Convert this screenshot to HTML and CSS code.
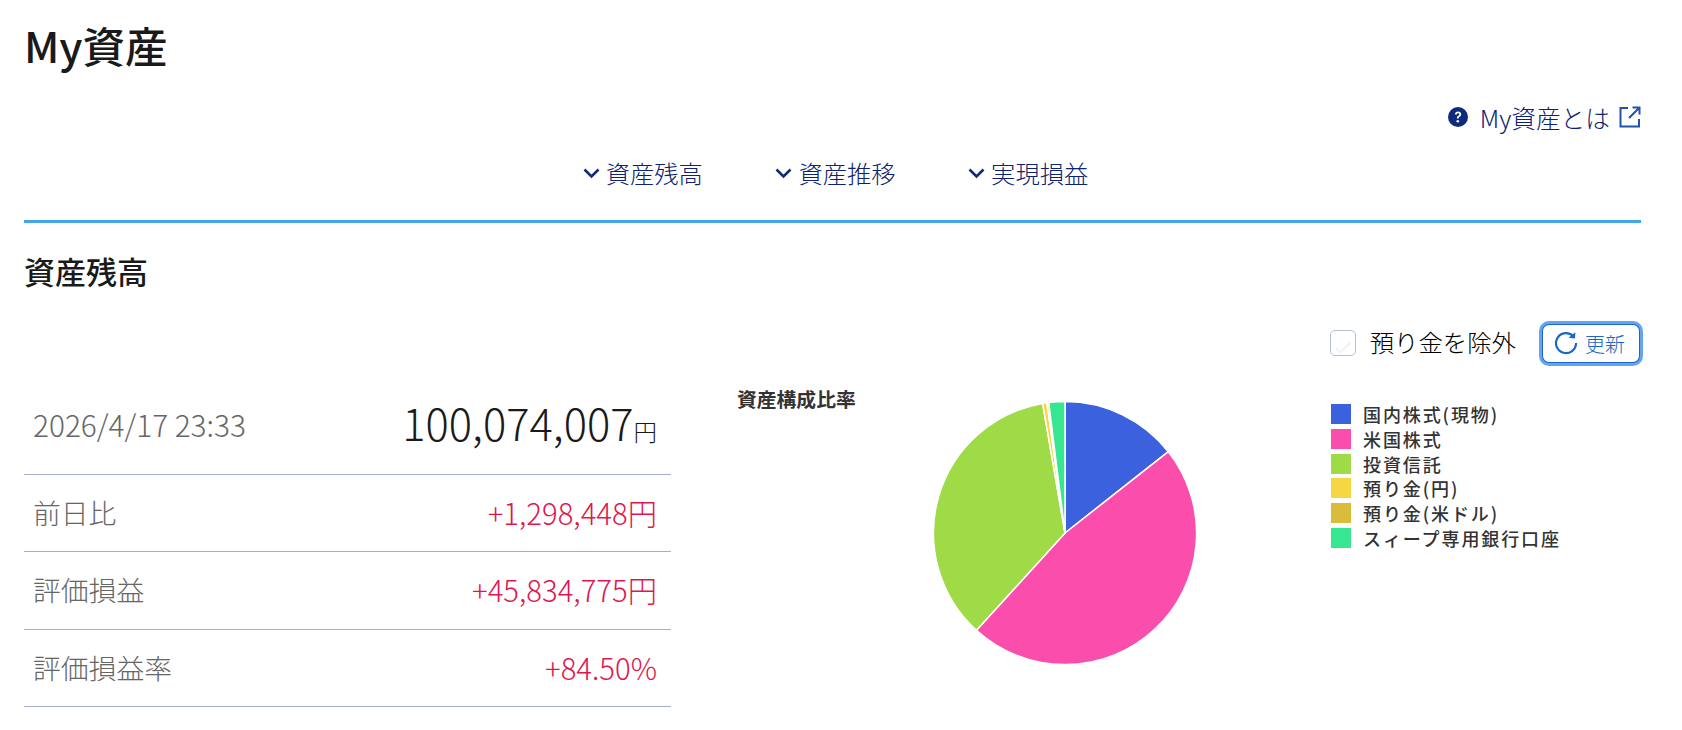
FILE: index.html
```html
<!DOCTYPE html>
<html lang="ja">
<head>
  <meta charset="UTF-8">
  <meta name="viewport" content="width=device-width, initial-scale=1.0">
  <title>My資産</title>
  <link rel="stylesheet" href="styles.css">
</head>
<body>
  <h1 class="page-title">My資産</h1>
  <div class="help-row">
    <a class="help-link" href="#">
      <svg class="help-icon" viewBox="0 0 20 20" width="20" height="20"><circle cx="10" cy="10" r="10" fill="#0f2a7d"/><path d="M6.9 7.6c.1-1.9 1.4-3 3.2-3 1.800 0 3.100 1.100 3.100 2.700 0 1.200-.6 1.900-1.500 2.500-.8.5-1 .8-1 1.600H8.900c-.1-1.300.3-2 1.300-2.600.8-.5 1.100-.9 1.100-1.400 0-.7-.5-1.100-1.200-1.100-.8 0-1.300.5-1.300 1.300z" fill="#fff"/><circle cx="9.800" cy="14.300" r="1.300" fill="#fff"/></svg>
      <span>My資産とは</span>
      <svg class="ext-icon" viewBox="0 0 22 22" width="22" height="22" fill="none" stroke="#1f55a8" stroke-width="2"><path d="M9 2H1.500v18.500h18.500V13"/><path d="M10 12L20.500 1.500M13.500 1.500h7v7"/></svg>
    </a>
  </div>
  <nav class="tabs">
    <a class="tab" href="#"><svg class="chevron" viewBox="0 0 17 11" width="17" height="11"><path d="M1.500 1.500L8.500 8.500l7-7" fill="none" stroke="#0f2a7d" stroke-width="2.600"/></svg>資産残高</a>
    <a class="tab" href="#"><svg class="chevron" viewBox="0 0 17 11" width="17" height="11"><path d="M1.500 1.500L8.500 8.500l7-7" fill="none" stroke="#0f2a7d" stroke-width="2.600"/></svg>資産推移</a>
    <a class="tab" href="#"><svg class="chevron" viewBox="0 0 17 11" width="17" height="11"><path d="M1.500 1.500L8.500 8.500l7-7" fill="none" stroke="#0f2a7d" stroke-width="2.600"/></svg>実現損益</a>
  </nav>
  <h2 class="section-title">資産残高</h2>
  <div class="toolbar">
    <label class="check-label">
      <span class="checkbox"><svg viewBox="0 0 26 26" width="24" height="24"><path d="M5 14l5 5 11-11" fill="none" stroke="#eaf5fd" stroke-width="2.500"/></svg></span>
      預り金を除外
    </label>
    <button class="refresh-btn">
      <svg viewBox="0 0 24 24" width="24" height="24" fill="none" stroke="#1a66c9" stroke-width="2.200"><path d="M19.500 5.500A10 10 0 1 0 22 12"/><path d="M14.500 6.800L21 7.500l.4-6.300z" fill="#1a66c9" stroke="none"/></svg>
      更新
    </button>
  </div>
  <div class="balance">
    <table class="summary">
      <tr class="total-row">
        <th class="date">2026/4/17 23:33</th>
        <td class="total">100,074,007<span class="yen">円</span></td>
      </tr>
      <tr>
        <th>前日比</th>
        <td class="plus">+1,298,448円</td>
      </tr>
      <tr>
        <th>評価損益</th>
        <td class="plus">+45,834,775円</td>
      </tr>
      <tr>
        <th>評価損益率</th>
        <td class="plus">+84.50%</td>
      </tr>
    </table>
    <div class="chart">
      <div class="chart-title">資産構成比率</div>
      <svg class="pie" viewBox="-131.500 -131.500 263 263" width="264" height="264">
        <g stroke="#fff" stroke-width="1.500" stroke-linejoin="round">
          <path d="M0 0V-131A131 131 0 0 1 102.950 -81z" fill="#3b61df"/>
          <path d="M0 0L102.950 -81A131 131 0 0 1 -88.200 96.900z" fill="#fb4dac"/>
          <path d="M0 0L-88.200 96.900A131 131 0 0 1 -22.300 -129.100z" fill="#9fda47"/>
          <path d="M0 0L-22.300 -129.100A131 131 0 0 1 -18 -129.800z" fill="#f6d743"/>
          <path d="M0 0L-18 -129.800A131 131 0 0 1 -16.200 -130z" fill="#d9bd3a"/>
          <path d="M0 0L-16.200 -130A131 131 0 0 1 0 -131z" fill="#36e691"/>
        </g>
      </svg>
      <ul class="legend">
        <li><i class="swatch c1"></i>国内株式(現物)</li>
        <li><i class="swatch c2"></i>米国株式</li>
        <li><i class="swatch c3"></i>投資信託</li>
        <li><i class="swatch c4"></i>預り金(円)</li>
        <li><i class="swatch c5"></i>預り金(米ドル)</li>
        <li><i class="swatch c6"></i>スィープ専用銀行口座</li>
      </ul>
    </div>
  </div>
</body>
</html>
```

FILE: styles.css
```css
body {
  margin: 0;
  padding: 0 41px 0 24px;
  height: 730px;
  box-sizing: border-box;
  overflow: hidden;
  background-color: #fff;
  color: #1a1a1a;
  font-family: "Noto Sans CJK JP", "Noto Sans", sans-serif;
}
a {
  text-decoration: none;
  color: #0b2172;
}
.page-title {
  margin: 0;
  padding-top: 14px;
  height: 66px;
  line-height: 62px;
  font-size: 42.600px;
  font-weight: 500;
}
.help-row {
  display: flex;
  justify-content: flex-end;
  height: 40px;
  padding-top: 19px;
  padding-bottom: 1px;
}
.help-link {
  display: flex;
  align-items: center;
  height: 36px;
  font-size: 24.700px;
  font-weight: 300;
}
.help-icon {
  margin-right: 12px;
}
.ext-icon {
  margin-left: 9px;
}
.tabs {
  display: flex;
  justify-content: center;
  gap: 72.500px;
  height: 66px;
  padding-top: 14px;
  padding-left: 6px;
  border-bottom: 3px solid #42a5ec;
}
.tab {
  display: flex;
  align-items: center;
  height: 36px;
  font-size: 24.300px;
  font-weight: 300;
}
.chevron {
  margin-right: 6px;
  margin-top: 3px;
}
.section-title {
  margin: 0;
  padding-top: 26px;
  height: 54px;
  line-height: 44px;
  font-size: 31px;
  font-weight: 500;
}
.toolbar {
  display: flex;
  justify-content: flex-end;
  align-items: center;
  height: 48px;
  padding-top: 14px;
}
.check-label {
  display: flex;
  align-items: center;
  font-size: 24.400px;
  font-weight: 300;
  color: #000;
  margin-right: 25px;
}
.checkbox {
  width: 24px;
  height: 24px;
  margin-top: 4px;
  margin-right: 14px;
  border: 1px solid #b4bfd6;
  border-radius: 5px;
}
.refresh-btn {
  display: flex;
  align-items: center;
  gap: 7px;
  width: 100px;
  height: 41px;
  margin-top: 4px;
  padding: 0 0 0 11px;
  box-sizing: border-box;
  border: 2px solid #1a66c9;
  border-radius: 8px;
  outline: 3px solid #65a5f0;
  outline-offset: -1px;
  background: #fff;
  color: #1a66c9;
  font-family: inherit;
  font-size: 20px;
  font-weight: 300;
}
.balance {
  display: flex;
  margin-top: 11px;
}
.summary {
  width: 647px;
  height: 330px;
  border-collapse: collapse;
}
.summary tr {
  height: 77px;
  border-bottom: 1px solid #a5aec8;
}
.summary .total-row {
  height: 98px;
}
.summary tr:nth-child(3) {
  height: 78px;
}
.summary th {
  padding: 0 0 2px 9px;
  text-align: left;
  font-size: 27.800px;
  font-weight: 300;
  color: #666;
}
.summary td {
  padding: 0 14px 2px 0;
  text-align: right;
  font-size: 29.300px;
  font-weight: 300;
}
.summary .date {
  font-size: 29.800px;
}
.summary .total {
  padding-bottom: 5px;
  font-size: 43.500px;
}
.yen {
  font-size: 23.500px;
}
.plus {
  color: #e0174c;
}
.chart {
  display: flex;
  flex: 1;
  margin-left: 66px;
}
.chart-title {
  width: 130px;
  margin-top: 8px;
  font-size: 19.800px;
  font-weight: 700;
  color: #333;
  white-space: nowrap;
}
.pie {
  margin-left: 66px;
  margin-top: 25px;
}
.legend {
  list-style: none;
  margin: 26px 0 0 134px;
  padding: 0;
  font-size: 18px;
  font-weight: 500;
  letter-spacing: 1.900px;
  color: #333;
}
.legend li {
  display: flex;
  align-items: center;
  height: 24.700px;
  white-space: nowrap;
}
.swatch {
  width: 20px;
  height: 20px;
  margin-right: 12px;
}
.c1 { background-color: #3b61df; }
.c2 { background-color: #fb4dac; }
.c3 { background-color: #9fda47; }
.c4 { background-color: #f6d743; }
.c5 { background-color: #d9bd3a; }
.c6 { background-color: #36e691; }
```
